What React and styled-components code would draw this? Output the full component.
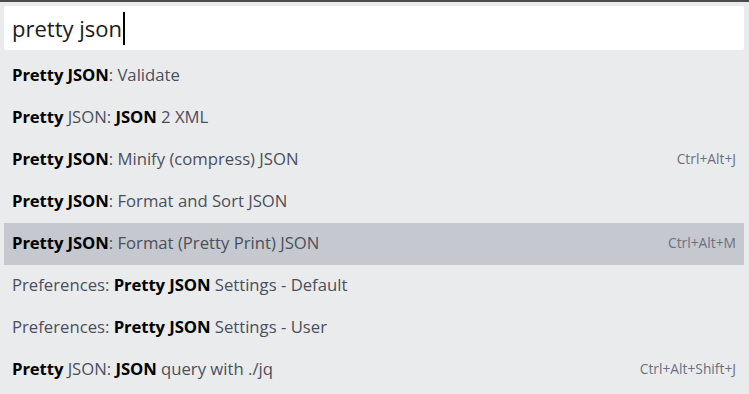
import React from 'react';
import styled, { createGlobalStyle } from 'styled-components';

const GlobalStyle = createGlobalStyle`
  html, body {
    margin: 0;
    padding: 0;
    background: #eaebed;
  }
  body {
    font-family: "Open Sans", "Noto Sans", sans-serif;
  }
`;

const Palette = styled.div`
  width: 749px;
  height: 394px;
  overflow: hidden;
  background: #eaebed;
  border-top: 2px solid #4b4c48;
  box-sizing: border-box;
  padding: 4px 5px 0 4px;
`;

const InputBox = styled.div`
  height: 44px;
  background: #fff;
  border-radius: 2px;
  display: flex;
  align-items: center;
  padding: 0 8px;
  font-size: 22px;
  color: #1a1a1a;
`;

const Caret = styled.span`
  display: inline-block;
  width: 2px;
  height: 33px;
  background: #000;
  margin-left: 1px;
`;

const List = styled.div`
  margin-top: 5px;
  display: flex;
  flex-direction: column;
`;

const Row = styled.div`
  height: 42px;
  box-sizing: border-box;
  display: flex;
  align-items: center;
  justify-content: space-between;
  padding: 0 8px 4px 8px;
  background: ${(p) => (p.$selected ? '#c6c8cf' : 'transparent')};
`;

const Label = styled.span`
  font-size: 16.7px;
  color: #4a4f5c;
  white-space: pre;
`;

const Match = styled.b`
  font-weight: 700;
  letter-spacing: -0.1px;
  color: #000;
`;

const Shortcut = styled.span`
  font-size: 13.8px;
  color: #6b7080;
`;

const items = [
  { parts: [['Pretty JSON', 1], [': Validate', 0]] },
  { parts: [['Pretty', 1], [' JSON: ', 0], ['JSON', 1], [' 2 XML', 0]] },
  { parts: [['Pretty JSON', 1], [': Minify (compress) JSON', 0]], key: 'Ctrl+Alt+J' },
  { parts: [['Pretty JSON', 1], [': Format and Sort JSON', 0]] },
  { parts: [['Pretty JSON', 1], [': Format (Pretty Print) JSON', 0]], key: 'Ctrl+Alt+M', selected: true },
  { parts: [['Preferences: ', 0], ['Pretty JSON', 1], [' Settings - Default', 0]] },
  { parts: [['Preferences: ', 0], ['Pretty JSON', 1], [' Settings - User', 0]] },
  { parts: [['Pretty', 1], [' JSON: ', 0], ['JSON', 1], [' query with ./jq', 0]], key: 'Ctrl+Alt+Shift+J' },
];

const App = () => {
  return (
    <>
      <GlobalStyle />
      <Palette>
        <InputBox>
          pretty json<Caret />
        </InputBox>
        <List>
          {items.map((item, i) => (
            <Row key={i} $selected={item.selected}>
              <Label>
                {item.parts.map(([text, bold], j) =>
                  bold ? <Match key={j}>{text}</Match> : <span key={j}>{text}</span>
                )}
              </Label>
              {item.key && <Shortcut>{item.key}</Shortcut>}
            </Row>
          ))}
        </List>
      </Palette>
    </>
  );
};

export default App;
